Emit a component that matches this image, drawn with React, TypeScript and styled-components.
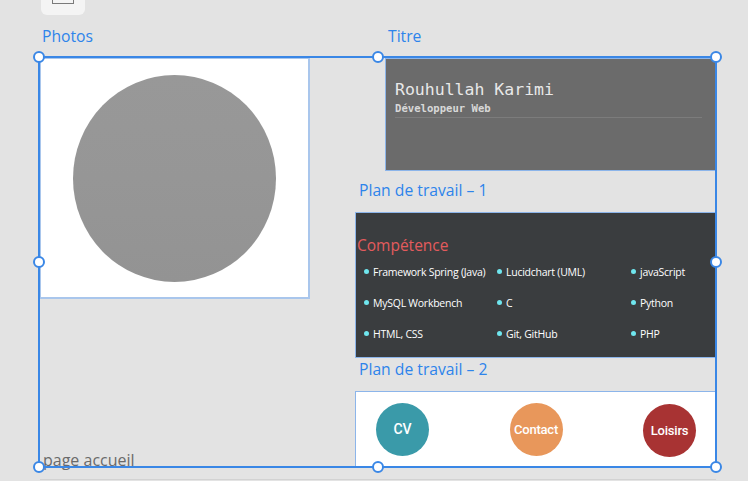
import React from "react";
import styled, { createGlobalStyle } from "styled-components";

const GlobalStyle = createGlobalStyle`
  html, body { margin: 0; padding: 0; background: #e3e3e3; }
  body { width: 748px; height: 481px; overflow: hidden; font-family: "Open Sans", "Noto Sans", sans-serif; }
  #root { width: 748px; height: 481px; }
`;

const BLUE = "#2d84eb";

const Canvas = styled.div`
  position: relative;
  width: 748px;
  height: 481px;
  background: #e3e3e3;
  overflow: hidden;
`;

const ToolButton = styled.div`
  position: absolute;
  left: 41px;
  top: -12px;
  width: 44px;
  height: 27px;
  border-radius: 6px;
  background: #f4f4f4;
  display: flex;
  justify-content: center;
  align-items: flex-end;
  padding-bottom: 11px;
  box-sizing: border-box;
`;

const ToolIcon = styled.div`
  width: 22px;
  height: 14px;
  border: 1px solid #7a7a7a;
  box-sizing: border-box;
`;

const Board = styled.div<{ $x: number; $y: number; $w: number }>`
  position: absolute;
  left: ${(p) => p.$x}px;
  top: ${(p) => p.$y - 32}px;
  width: ${(p) => p.$w}px;
  display: flex;
  flex-direction: column;
`;

const BoardLabel = styled.div<{ $indent: number }>`
  height: 20px;
  line-height: 20px;
  margin-bottom: 12px;
  padding-left: ${(p) => p.$indent}px;
  font-size: 15.7px;
  color: ${BLUE};
  white-space: nowrap;
`;

const Surface = styled.div<{ $h: number; $bg: string }>`
  height: ${(p) => p.$h}px;
  background: ${(p) => p.$bg};
  border: 1px solid #8cb5ea;
  box-sizing: border-box;
  overflow: hidden;
`;

const PhotoSurface = styled(Surface)`
  border-right-width: 2px;
  border-bottom-width: 2px;
  border-color: #a9c6ec;
  display: flex;
  justify-content: center;
  padding-top: 16px;
`;

const Avatar = styled.div`
  width: 203px;
  height: 207px;
  border-radius: 50%;
  background: linear-gradient(#989898 0%, #969696 50%, #939393 100%);
`;

const TitleSurface = styled(Surface)`
  padding: 21px 14px 0 9px;
  display: flex;
  flex-direction: column;
`;

const Name = styled.div`
  font-family: "DejaVu Sans Mono", "Liberation Mono", monospace;
  font-size: 16.5px;
  line-height: 20px;
  color: #e8e8e8;
  white-space: nowrap;
`;

const Role = styled.div`
  font-family: "DejaVu Sans Mono", "Liberation Mono", monospace;
  font-size: 10.6px;
  font-weight: 700;
  line-height: 14px;
  margin-top: 1px;
  color: #d8d8d8;
  padding-bottom: 2px;
  border-bottom: 1px solid #7c7c7c;
  white-space: nowrap;
`;

const SkillSurface = styled(Surface)`
  padding: 22px 0 0 1px;
  display: flex;
  flex-direction: column;
`;

const SkillTitle = styled.div`
  font-size: 15.5px;
  line-height: 20px;
  color: #e35b5d;
  margin-bottom: 1px;
`;

const SkillGrid = styled.div`
  display: grid;
  grid-template-columns: 133px 134px 1fr;
  grid-auto-rows: 31px;
  padding-left: 7px;
`;

const Skill = styled.div`
  display: flex;
  align-items: center;
  gap: 4px;
  font-size: 10.5px;
  letter-spacing: -0.25px;
  color: #ffffff;
  white-space: nowrap;
`;

const Dot = styled.span`
  width: 5px;
  height: 5px;
  border-radius: 50%;
  background: #6fe6ee;
  flex: none;
`;

const NavSurface = styled(Surface)`
  display: flex;
  justify-content: space-between;
  align-items: center;
  padding: 0 20px 0 20px;
`;

const NavCircle = styled.div<{ $color: string; $size: number; $dy: number }>`
  width: 53px;
  height: 53px;
  border-radius: 50%;
  background: ${(p) => p.$color};
  color: #ffffff;
  display: flex;
  justify-content: center;
  align-items: center;
  margin-top: ${(p) => p.$dy}px;
  font-family: Roboto, "Liberation Sans", sans-serif;
  font-weight: 500;
  font-size: ${(p) => p.$size}px;
  letter-spacing: -0.2px;
`;

const Selection = styled.div`
  position: absolute;
  left: 38px;
  top: 56px;
  width: 679px;
  height: 412px;
  border: 2px solid #3a87e6;
  box-sizing: border-box;
  pointer-events: none;
`;

const Handle = styled.span<{ $x: number; $y: number }>`
  position: absolute;
  left: ${(p) => p.$x - 6}px;
  top: ${(p) => p.$y - 6}px;
  width: 12px;
  height: 12px;
  border-radius: 50%;
  background: #ffffff;
  border: 2px solid #3a87e6;
  box-sizing: border-box;
`;

const PageName = styled.div`
  position: absolute;
  left: 43px;
  top: 450px;
  font-size: 16px;
  line-height: 20px;
  color: #6a6a6a;
`;

const ShadowLine = styled.div`
  position: absolute;
  left: 40px;
  top: 479px;
  width: 676px;
  height: 1px;
  background: #d2d2d2;
`;

const skills = [
  "Framework Spring (Java)",
  "Lucidchart (UML)",
  "javaScript",
  "MySQL Workbench",
  "C",
  "Python",
  "HTML, CSS",
  "Git, GitHub",
  "PHP",
];

const handles = [
  [39, 57],
  [378, 57],
  [716, 57],
  [39, 262],
  [716, 262],
  [39, 467],
  [378, 467],
  [716, 467],
];

export default function App() {
  return (
    <>
      <GlobalStyle />
      <Canvas>
        <ToolButton>
          <ToolIcon />
        </ToolButton>

        <Board $x={40} $y={58} $w={270}>
          <BoardLabel $indent={2}>Photos</BoardLabel>
          <PhotoSurface $h={241} $bg="#ffffff">
            <Avatar />
          </PhotoSurface>
        </Board>

        <Board $x={385} $y={58} $w={332}>
          <BoardLabel $indent={3}>Titre</BoardLabel>
          <TitleSurface $h={113} $bg="#6b6b6b">
            <Name>Rouhullah Karimi</Name>
            <Role>Développeur Web</Role>
          </TitleSurface>
        </Board>

        <Board $x={355} $y={212} $w={362}>
          <BoardLabel $indent={4}>Plan de travail – 1</BoardLabel>
          <SkillSurface $h={146} $bg="#3a3d3f">
            <SkillTitle>Compétence</SkillTitle>
            <SkillGrid>
              {skills.map((s) => (
                <Skill key={s}>
                  <Dot />
                  {s}
                </Skill>
              ))}
            </SkillGrid>
          </SkillSurface>
        </Board>

        <Board $x={355} $y={391} $w={362}>
          <BoardLabel $indent={4}>Plan de travail – 2</BoardLabel>
          <NavSurface $h={76} $bg="#ffffff">
            <NavCircle $color="#3a9aa9" $size={14} $dy={0}>CV</NavCircle>
            <NavCircle $color="#e8975b" $size={13} $dy={0}>Contact</NavCircle>
            <NavCircle $color="#a83333" $size={13} $dy={2}>Loisirs</NavCircle>
          </NavSurface>
        </Board>

        <ShadowLine />
        <PageName>page accueil</PageName>

        <Selection />
        {handles.map(([x, y]) => (
          <Handle key={`${x}-${y}`} $x={x} $y={y} />
        ))}
      </Canvas>
    </>
  );
}
